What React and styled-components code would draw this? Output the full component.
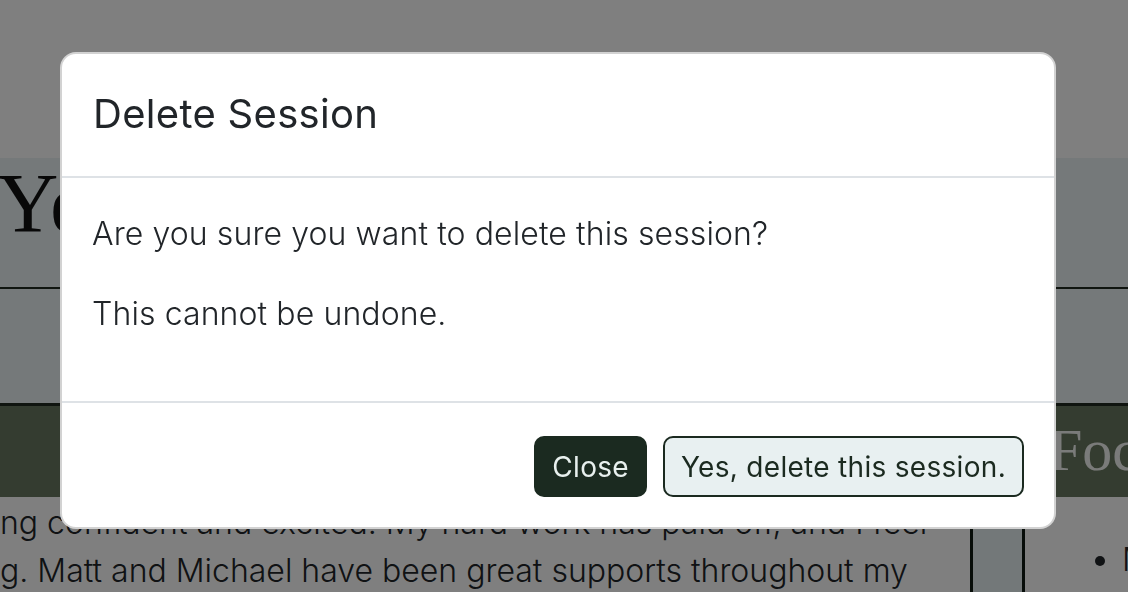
import React from 'react';
import styled, { createGlobalStyle } from 'styled-components';

const GlobalStyle = createGlobalStyle`
  html, body {
    margin: 0;
    padding: 0;
    overflow: hidden;
    background: #fff;
  }
  body {
    font-family: Inter, "Open Sans", sans-serif;
    color: #212529;
  }
  * { box-sizing: border-box; }
`;

const Page = styled.div`
  width: 1128px;
  height: 592px;
  overflow: hidden;
  display: flex;
  flex-direction: column;
`;

const TopBar = styled.div`
  height: 158px;
  background: #fff;
  flex-shrink: 0;
`;

const Hero = styled.div`
  height: 131px;
  background: #eaf2f4;
  border-bottom: 2px solid #202a20;
  padding: 3px 0 0 0;
  flex-shrink: 0;
`;

const HeroTitle = styled.h1`
  margin: 0 0 0 -3px;
  font-family: "Liberation Serif", serif;
  font-weight: 400;
  font-size: 85px;
  line-height: 1;
  color: #111;
  white-space: nowrap;
`;

const SubBar = styled.div`
  height: 117px;
  background: #eaf2f4;
  border-bottom: 3px solid #202a20;
  flex-shrink: 0;
`;

const BandRow = styled.div`
  height: 91px;
  background: #687860;
  display: grid;
  grid-template-columns: 1025px 1fr;
  flex-shrink: 0;
`;

const BandTitle = styled.h2`
  margin: 0;
  padding-left: 24px;
  font-family: "Liberation Serif", serif;
  font-weight: 400;
  font-size: 60px;
  line-height: 88px;
  color: #f5f7f4;
  white-space: nowrap;
`;

const ContentRow = styled.div`
  flex: 1;
  display: grid;
  grid-template-columns: 970px 55px 1fr;
  background: #fff;
`;

const MainText = styled.div`
  padding-top: 2px;
  font-weight: 300;
  font-size: 32px;
  line-height: 48px;
  color: #212529;
  white-space: nowrap;
  overflow: hidden;
`;

const Spacer = styled.div`
  background: #e7f0f3;
  border-left: 3px solid #0f1a12;
  border-right: 3px solid #0f1a12;
`;

const SideList = styled.ul`
  margin: 39px 0 0;
  padding-left: 97px;
  font-weight: 300;
  font-size: 32px;
  line-height: 48px;
  white-space: nowrap;
`;

const Backdrop = styled.div`
  position: fixed;
  inset: 0;
  background: rgba(0, 0, 0, 0.5);
  padding: 52px 0 0 60px;
`;

const Dialog = styled.div`
  width: 996px;
  background: #fff;
  border: 2px solid rgba(0, 0, 0, 0.175);
  border-radius: 16px;
  display: flex;
  flex-direction: column;
`;

const Header = styled.div`
  padding: 30px 31px 32px;
  border-bottom: 2px solid #dee2e6;
`;

const Title = styled.h5`
  margin: 0;
  font-size: 40px;
  line-height: 60px;
  font-weight: 400;
  letter-spacing: 0.3px;
  color: #212529;
`;

const Body = styled.div`
  padding: 32px 30px 31px;

  p {
    margin: 0 0 32px;
    font-size: 32px;
    line-height: 48px;
    font-weight: 300;
    letter-spacing: 0.1px;
    color: #212529;
  }
`;

const Footer = styled.div`
  border-top: 2px solid #dee2e6;
  display: flex;
  justify-content: flex-end;
  gap: 16px;
  padding: 33px 30px 30px 24px;
`;

const Button = styled.button`
  height: 61px;
  padding: 0 16px;
  border-radius: 10px;
  border: 2px solid #1b2a20;
  background: ${(p) => (p.$primary ? '#1b2a20' : '#e8f0f1')};
  color: ${(p) => (p.$primary ? '#e8f0ee' : '#1b2a20')};
  font-family: Inter, "Open Sans", sans-serif;
  font-size: 28px;
  font-weight: 400;
  letter-spacing: 0.3px;
  cursor: pointer;
`;

const App = () => (
  <>
    <GlobalStyle />
    <Page>
      <TopBar />
      <Hero>
        <HeroTitle>Yesterday&apos;s Session</HeroTitle>
      </Hero>
      <SubBar />
      <BandRow>
        <div />
        <BandTitle>Focus</BandTitle>
      </BandRow>
      <ContentRow>
        <MainText>
          <div>ng confident and excited. My hard work has paid off, and I feel</div>
          <div>g. Matt and Michael have been great supports throughout my</div>
        </MainText>
        <Spacer />
        <SideList>
          <li>Mindset</li>
        </SideList>
      </ContentRow>
    </Page>
    <Backdrop>
      <Dialog>
        <Header>
          <Title>Delete Session</Title>
        </Header>
        <Body>
          <p>Are you sure you want to delete this session?</p>
          <p>This cannot be undone.</p>
        </Body>
        <Footer>
          <Button $primary>Close</Button>
          <Button>Yes, delete this session.</Button>
        </Footer>
      </Dialog>
    </Backdrop>
  </>
);

export default App;
